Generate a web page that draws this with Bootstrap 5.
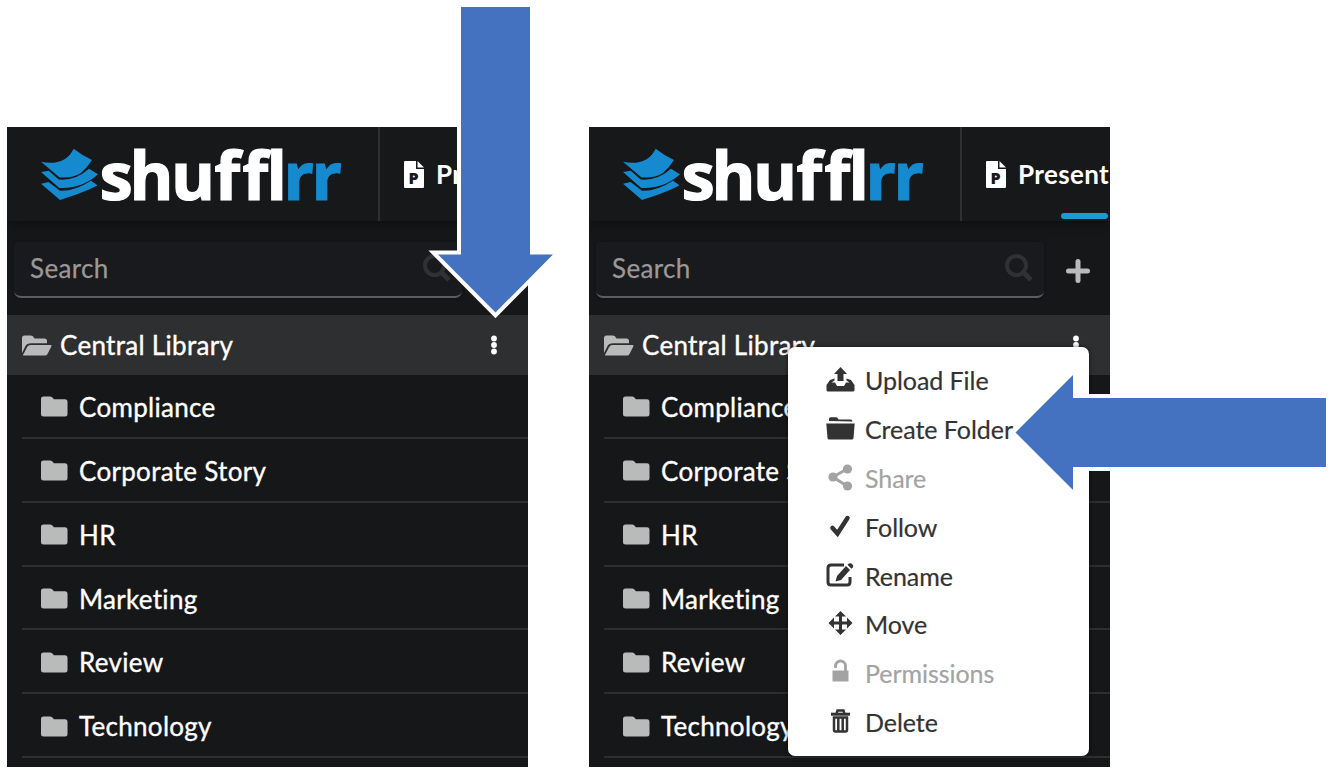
<!DOCTYPE html>
<html lang="en">
<head>
<meta charset="utf-8">
<meta name="viewport" content="width=device-width, initial-scale=1">
<title>Shufflrr – Create Folder</title>
<link href="https://cdn.jsdelivr.net/npm/bootstrap@5.3.0/dist/css/bootstrap.min.css" rel="stylesheet">
<style>
body{font-family:Lato,"Open Sans",sans-serif;background:#fff;width:1330px;height:776px;overflow:hidden;font-size:26px;line-height:32px;color:#fff;font-variant-ligatures:none}
svg{display:block;flex:none}
.stage{padding:127px 0 0 7px;gap:61px}
.panel{width:521px;height:640px;background:#161719}
.clip{overflow:hidden;height:640px}
.topbar{height:94px;background:#17181a;box-shadow:0 2px 12px rgba(0,0,0,.45)}
.brand{width:373px;border-right:2px solid #2f3032}
.brand svg{margin:16px 0 0 33px}
.tab{padding-left:24px;gap:12px;font-weight:700;font-size:26px;white-space:nowrap;letter-spacing:.35px}
.tabline{left:472px;top:86px;width:47px;height:6px;background:#1b9bd1}
.tools{height:94px;padding:21px 20px 0 7px}
.searchbox{width:448px;height:56px;background:#191a1d;border-bottom:2px solid #5c5d5e;border-radius:4px 4px 7px 7px;padding:0 11px 2px 16px;color:#999;font-size:26px;letter-spacing:.35px;box-shadow:0 0 3px #101112;-webkit-text-stroke:.25px #999}
.addbtn{margin-top:17px}
.rootrow{height:60px;background:#2e2f31;padding:0 31px 0 15px}
.rootrow span{margin-left:8px}
.tree{padding-left:15px}
.leaf{height:63.87px;border-bottom:2px solid #2d2e30;padding:2px 0 0 19px;gap:11px}
.white-text{-webkit-text-stroke:.35px #fff;letter-spacing:.3px}
.ctx{left:199px;top:220px;width:301px;height:409px;background:#fff;border-radius:7px;color:#333;padding:9px 0 0 38px;font-size:25px;box-shadow:0 0 4px rgba(0,0,0,.6)}
.ctx li{height:48.8px;gap:10px;-webkit-text-stroke:.2px currentColor;letter-spacing:-.05px}
.ctx li.off{color:#a3a3a3}
.arrows{left:0;top:0}
.logotext{font-family:"Open Sans","Noto Sans",sans-serif;font-weight:700;font-size:67px;stroke-width:1.2px;letter-spacing:0}
.pletter{font-family:"Open Sans",sans-serif;font-weight:800;font-size:16px}
</style>
</head>
<body>
<svg width="0" height="0" class="position-absolute" aria-hidden="true">
<symbol id="sheets" viewBox="0 0 60 70">
<g fill="#168acf"><path d="M1 18.700C15 22 28 18 33.700 5.700Q43 13 52 17Q47 25 41 30Q32 35.500 19.300 34.300Z"/><path d="M1 29L8.700 27.700L18.700 36.500Q35 38 49 25.700L58 31.300Q52 37 43 41Q32 45.500 19.300 45Z"/><path d="M1 40.700L8.500 39L20 47.800Q34 48.500 51 37.700L57.500 42.300Q48 48 20 57Z"/></g>
</symbol>
<symbol id="mag" viewBox="0 0 28 28"><circle cx="11.500" cy="11.500" r="9.500" fill="none" stroke="#303134" stroke-width="4"/><path d="M18 18L26 26" stroke="#303134" stroke-width="5"/></symbol>
<symbol id="plus" viewBox="0 0 24 24"><path d="M12 2.500V21.500M2.500 12H21.500" stroke="#b9bbba" stroke-width="5" stroke-linecap="round"/></symbol>
<symbol id="open" viewBox="0 0 30 21"><path fill="#b9bbba" d="M0 18V3Q0 .5 2.500.5H9Q11 .5 12.500 3.500H22.500Q25 3.500 25 6V8.300H9Q5 8.300 3.500 11ZM1 20L5.200 12Q6.200 10 8.500 10H28.800Q30 10 29.300 11.500L25.500 19Q24.800 20.500 23 20.500H2Q.8 20.500 1 20Z"/></symbol>
<symbol id="folder" viewBox="0 0 27 21"><path fill="#b9bbba" d="M2.500.5H9.500Q11 .5 13 3.300H24Q26.500 3.300 26.500 5.800V18Q26.500 20.500 24 20.500H2.500Q0 20.500 0 18V3Q0 .5 2.500.5Z"/></symbol>
<symbol id="dots" viewBox="0 0 6 20"><g fill="#fff"><circle cx="3" cy="3.500" r="2.900"/><circle cx="3" cy="10" r="2.900"/><circle cx="3" cy="16.500" r="2.900"/></g></symbol>
</svg>

<div class="stage d-flex">
  <section class="panel"><div class="clip">
    <header class="topbar d-flex position-relative">
      <div class="brand"><svg width="310" height="70"><use href="#sheets" width="60" height="70"/><text class="logotext" y="56.500" x="59.500 89.500 131 174.300 202.300 226.500 243.500 271.500" fill="#fff" stroke="#fff">shuffl<tspan fill="#168acf" stroke="#168acf">rr</tspan></text></svg></div>
      <div class="tab d-flex align-items-center"><svg width="20" height="27"><path fill="#fff" d="M1 0H12V8H20V26Q20 27 19 27H1Q0 27 0 26V1Q0 0 1 0ZM13.500 0L20 6.500H13.500Z"/><text class="pletter" x="4.500" y="23" fill="#17181a">P</text></svg><span>Pr</span></div>
    </header>
    <div class="tools d-flex">
      <div class="searchbox d-flex align-items-center justify-content-between"><span>Search</span><svg width="28" height="28"><use href="#mag"/></svg></div>
    </div>
    <div class="rootrow d-flex align-items-center"><svg width="30" height="21"><use href="#open"/></svg><span class="white-text">Central Library</span><svg class="ms-auto" width="6" height="20"><use href="#dots"/></svg></div>
    <ul class="tree list-unstyled mb-0 white-text">
      <li class="leaf d-flex align-items-center"><svg width="27" height="21"><use href="#folder"/></svg>Compliance</li>
      <li class="leaf d-flex align-items-center"><svg width="27" height="21"><use href="#folder"/></svg>Corporate Story</li>
      <li class="leaf d-flex align-items-center"><svg width="27" height="21"><use href="#folder"/></svg>HR</li>
      <li class="leaf d-flex align-items-center"><svg width="27" height="21"><use href="#folder"/></svg>Marketing</li>
      <li class="leaf d-flex align-items-center"><svg width="27" height="21"><use href="#folder"/></svg>Review</li>
      <li class="leaf d-flex align-items-center"><svg width="27" height="21"><use href="#folder"/></svg>Technology</li>
    </ul>
  </div></section>

  <section class="panel position-relative"><div class="clip">
    <header class="topbar d-flex position-relative">
      <div class="brand"><svg width="310" height="70"><use href="#sheets" width="60" height="70"/><text class="logotext" y="56.500" x="59.500 89.500 131 174.300 202.300 226.500 243.500 271.500" fill="#fff" stroke="#fff">shuffl<tspan fill="#168acf" stroke="#168acf">rr</tspan></text></svg></div>
      <div class="tab d-flex align-items-center"><svg width="20" height="27"><path fill="#fff" d="M1 0H12V8H20V26Q20 27 19 27H1Q0 27 0 26V1Q0 0 1 0ZM13.500 0L20 6.500H13.500Z"/><text class="pletter" x="4.500" y="23" fill="#17181a">P</text></svg><span>Present</span></div>
      <span class="tabline position-absolute rounded-pill"></span>
    </header>
    <div class="tools d-flex justify-content-between">
      <div class="searchbox d-flex align-items-center justify-content-between"><span>Search</span><svg width="28" height="28"><use href="#mag"/></svg></div>
      <svg class="addbtn" width="24" height="24"><use href="#plus"/></svg>
    </div>
    <div class="rootrow d-flex align-items-center"><svg width="30" height="21"><use href="#open"/></svg><span class="white-text">Central Library</span><svg class="ms-auto" width="6" height="20"><use href="#dots"/></svg></div>
    <ul class="tree list-unstyled mb-0 white-text">
      <li class="leaf d-flex align-items-center"><svg width="27" height="21"><use href="#folder"/></svg>Compliance</li>
      <li class="leaf d-flex align-items-center"><svg width="27" height="21"><use href="#folder"/></svg>Corporate Story</li>
      <li class="leaf d-flex align-items-center"><svg width="27" height="21"><use href="#folder"/></svg>HR</li>
      <li class="leaf d-flex align-items-center"><svg width="27" height="21"><use href="#folder"/></svg>Marketing</li>
      <li class="leaf d-flex align-items-center"><svg width="27" height="21"><use href="#folder"/></svg>Review</li>
      <li class="leaf d-flex align-items-center"><svg width="27" height="21"><use href="#folder"/></svg>Technology</li>
    </ul>
  </div>
    <ul class="ctx list-unstyled mb-0 position-absolute">
      <li class="d-flex align-items-center"><svg width="29" height="28" viewBox="0 0 29 28" fill="currentColor"><path d="M14.500 1L21 8H17.500V15H11.500V8H8ZM8.500 12.500V14.500L5.500 16.500H9L11 20H18L20 16.500H23.500L20.500 14.500V12.500L25 14L28.500 19V24Q28.500 25.500 27 25.500H2Q.5 25.500 .5 24V19L4 14Z"/></svg>Upload File</li>
      <li class="d-flex align-items-center"><svg width="29" height="28" viewBox="0 0 29 28" fill="currentColor"><path d="M3 6V4Q3 2.300 4.500 2.300H10Q11.500 2.300 12.500 4.500H24.500Q26.500 4.500 26.500 6.500ZM.3 8.500H28.700L27.500 23Q27.300 24.500 25.800 24.500H3.200Q1.700 24.500 1.500 23Z"/></svg>Create Folder</li>
      <li class="off d-flex align-items-center"><svg width="29" height="28" viewBox="0 0 29 28" fill="currentColor"><path d="M21 5L7 13L21 22" fill="none" stroke="currentColor" stroke-width="3"/><circle cx="21.500" cy="5" r="4.600"/><circle cx="7" cy="13" r="4.600"/><circle cx="21.500" cy="22" r="4.600"/></svg>Share</li>
      <li class="d-flex align-items-center"><svg width="29" height="28" viewBox="0 0 29 28"><path d="M6.500 15L11.500 20.500L21.500 5" fill="none" stroke="currentColor" stroke-width="4.500" stroke-linecap="round"/></svg>Follow</li>
      <li class="d-flex align-items-center"><svg width="29" height="28" viewBox="0 0 29 28"><path d="M18 3H5Q2 3 2 6V20Q2 23 5 23H21Q24 23 24 20V15" fill="none" stroke="currentColor" stroke-width="3"/><path d="M9.500 19.500L11 14L20 4L24 8L15 18ZM21.500 2.800L23 1.500Q25 .8 26.500 2.500Q28 4 26.800 5.500L25.400 6.800Z" fill="currentColor"/></svg>Rename</li>
      <li class="d-flex align-items-center"><svg width="29" height="28" viewBox="0 0 29 28" fill="currentColor"><path d="M14.500 1L20 6.500H16V11.500H21V7.500L26.500 13L21 18.500V14.500H16V19.500H20L14.500 25L9 19.500H13V14.500H8V18.500L2.500 13L8 7.500V11.500H13V6.500H9Z"/></svg>Move</li>
      <li class="off d-flex align-items-center"><svg width="29" height="28" viewBox="0 0 29 28"><path d="M9.500 9V7A5 5 0 0 1 19.500 7V13" fill="none" stroke="currentColor" stroke-width="2.800"/><path d="M6.500 11.500H22.500V22.500H6.500Z" fill="currentColor"/></svg>Permissions</li>
      <li class="d-flex align-items-center"><svg width="29" height="28" viewBox="0 0 29 28" fill="none" stroke="currentColor"><path d="M10.500 6L11.500 2.500H17.500L18.500 6" stroke-width="2.500"/><path d="M5 6.200H24" stroke-width="3"/><path d="M8 9.500V22Q8 23.500 9.500 23.500H19.500Q21 23.500 21 22V9.500ZM12.300 9V23M16.700 9V23" stroke-width="2.500"/></svg>Delete</li>
    </ul>
  </section>
</div>

<svg class="arrows position-absolute" width="1330" height="776" fill="#4472c0">
  <g stroke="#fff" stroke-width="8" stroke-linejoin="miter" paint-order="stroke">
  <path d="M461 7H530V254.500H553L495.500 312.500L438 254.500H461Z"/>
  <path d="M1326 398V467H1073V490L1015.500 432.500L1073 375V398Z"/></g>
</svg>
<script src="https://cdn.jsdelivr.net/npm/bootstrap@5.3.0/dist/js/bootstrap.bundle.min.js"></script>
</body>
</html>
